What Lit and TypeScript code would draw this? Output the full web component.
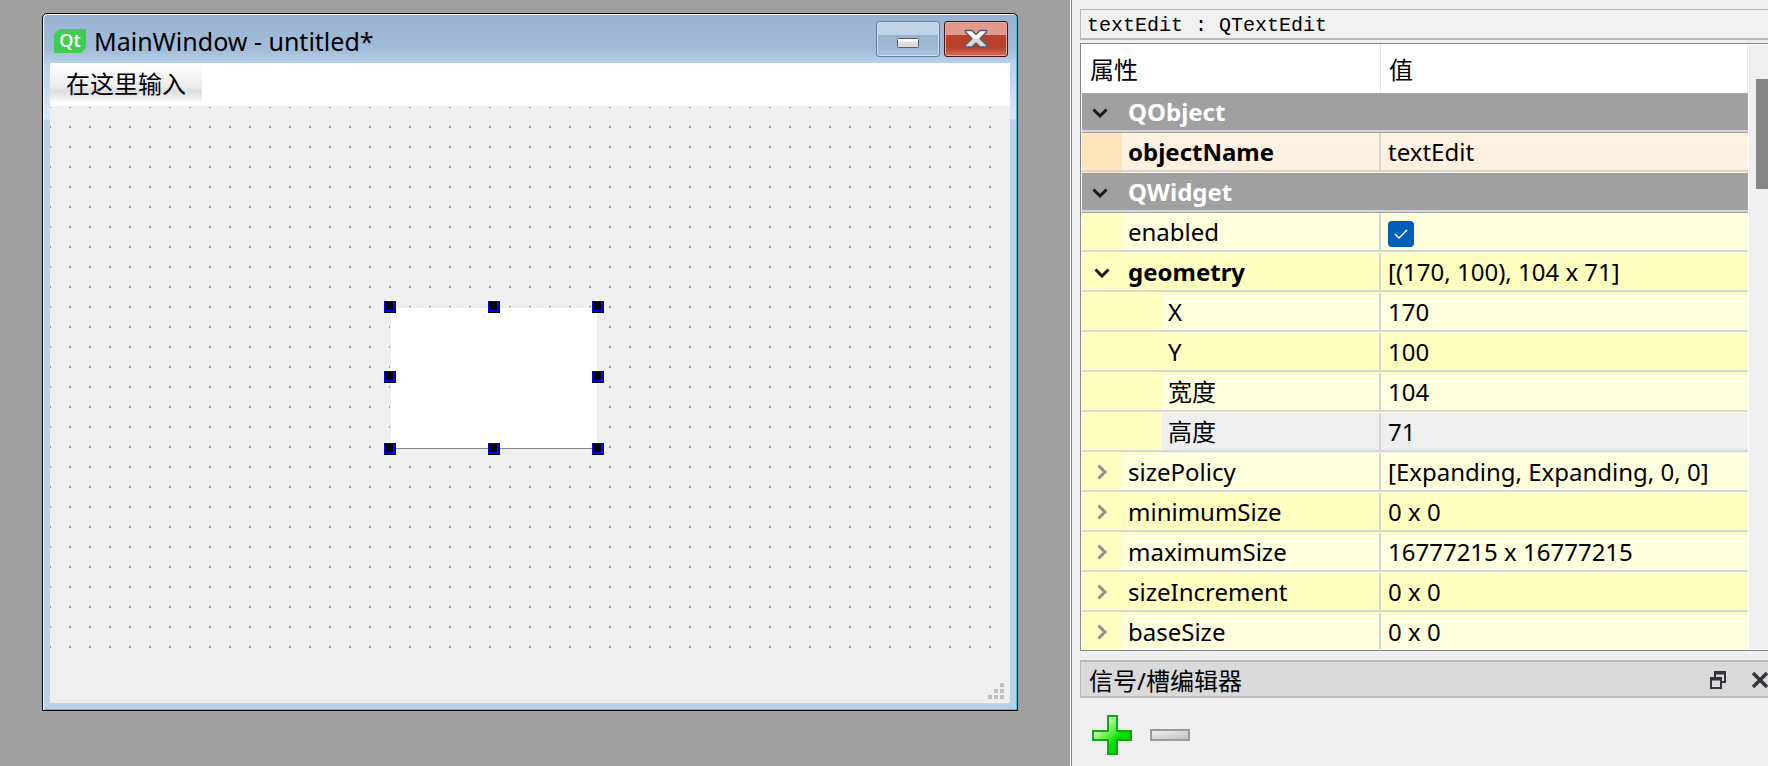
import { LitElement, html, css, svg, nothing } from "lit";
import { customElement, property } from "lit/decorators.js";
import { classMap } from "lit/directives/class-map.js";

interface Row {
  name: string;
  value?: string;
  kind?: "group";
  tone?: "peach" | "light" | "deep" | "plain";
  child?: boolean;
  bold?: boolean;
  checked?: boolean;
  arrow?: "open" | "closed";
}

const ROWS: Row[] = [
  { name: "QObject", kind: "group", arrow: "open" },
  { name: "objectName", value: "textEdit", tone: "peach", bold: true },
  { name: "QWidget", kind: "group", arrow: "open" },
  { name: "enabled", checked: true, tone: "light" },
  { name: "geometry", value: "[(170, 100), 104 x 71]", tone: "deep", bold: true, arrow: "open" },
  { name: "X", value: "170", tone: "light", child: true },
  { name: "Y", value: "100", tone: "deep", child: true },
  { name: "宽度", value: "104", tone: "light", child: true },
  { name: "高度", value: "71", tone: "plain", child: true },
  { name: "sizePolicy", value: "[Expanding, Expanding, 0, 0]", tone: "light", arrow: "closed" },
  { name: "minimumSize", value: "0 x 0", tone: "deep", arrow: "closed" },
  { name: "maximumSize", value: "16777215 x 16777215", tone: "light", arrow: "closed" },
  { name: "sizeIncrement", value: "0 x 0", tone: "deep", arrow: "closed" },
  { name: "baseSize", value: "0 x 0", tone: "light", arrow: "closed" },
];

const reset = css`
  * { box-sizing: border-box; }
  button {
    font: inherit;
    color: inherit;
    margin: 0;
    padding: 0;
    border: 0;
    background: none;
  }
  svg { display: block; }
`;

@customElement("form-window")
export class FormWindow extends LitElement {
  static styles = [
    reset,
    css`
      :host {
        display: flex;
        flex-direction: column;
        border: 1px solid #000;
        border-radius: 5px 5px 0 0;
        background: linear-gradient(#99b4d1, #a2bcd9 36px, #b9d1ea 49px, #dce8f5 105px, #b9d1ea 106px);
        box-shadow: inset 1px 1px #fff, inset -1px -1px #35c5e8;
        padding: 0 7px 7px;
      }
      .title {
        display: flex;
        align-items: flex-start;
        height: 49px;
        padding: 7px 2px 0 4px;
        gap: 4px;
      }
      .brand {
        flex: 1;
        display: flex;
        align-items: center;
        gap: 8px;
        height: 40px;
      }
      h1 {
        margin: 0;
        font-size: 25px;
        font-weight: 400;
        line-height: 32px;
        white-space: nowrap;
      }
      .min, .close {
        display: grid;
        place-items: center;
        width: 64px;
        height: 36px;
        border: 1px solid #66799a;
        border-radius: 3px;
        background: linear-gradient(#bed2e8 0 13px, #98b2d0 13px, #a6c0dd);
        box-shadow: inset 0 0 0 1px #cfdfef;
      }
      .min { padding-top: 8px; }
      .close {
        border-color: #4a1420;
        background: linear-gradient(#e39a8e 0 13px, #b8422b 13px 26px, #cf7459);
        box-shadow: inset 0 0 0 1px #e8a79c;
      }
      .menubar {
        display: flex;
        height: 43px;
        background: #fff;
      }
      .menubar button {
        height: 39px;
        padding: 2px 16px 0;
        font-size: 24px;
        line-height: 32px;
        background: linear-gradient(#fff, #ececec 24px, #dcdcdc 28px, #fafafa);
      }
      .body {
        flex: 1;
        display: flex;
        flex-direction: column;
        background: #efefef;
        padding-top: 1px;
      }
      .dots {
        flex: 1;
        position: relative;
        margin-right: 2px;
        background: conic-gradient(from 270deg at 2px 2px, #a0a0a0 0 90deg, transparent 0) -1px -1px / 20px 20px;
      }
      .edit {
        position: absolute;
        left: 340px;
        top: 200px;
        width: 208px;
        height: 142px;
        resize: none;
        border: 1px solid #ebebeb;
        border-bottom-color: #868686;
        border-radius: 0;
        background: #fff;
        outline: 0;
      }
      .handle {
        position: absolute;
        width: 12px;
        height: 12px;
        background: linear-gradient(#000 0 0) 1px 1px / 8px 8px no-repeat #00f;
        border: 0 solid #000;
        border-width: 0 1px 1px 0;
      }
      .l { left: 334px; }
      .c { left: 438px; }
      .r { left: 542px; }
      .t { top: 194px; }
      .m { top: 264px; }
      .b { top: 336px; }
      .status {
        display: flex;
        justify-content: flex-end;
        align-items: flex-end;
        height: 53px;
        padding: 4px 6px;
      }
    `,
  ];

  render() {
    const handles = ["l t", "c t", "r t", "l m", "r m", "l b", "c b", "r b"];
    return html`
      <div class="title">
        <div class="brand">
          <svg width="32" height="24" viewBox="0 0 32 24">
            <path d="M5 0H32V19L27 24H0V5Z" fill="#41cd52" />
            <text x="16" y="18" text-anchor="middle" font-family="Open Sans, sans-serif" font-size="18" font-weight="600" fill="#fff">Qt</text>
          </svg>
          <h1>MainWindow - untitled*</h1>
        </div>
        <button class="min" aria-label="Minimize">
          <svg width="22" height="10" viewBox="0 0 22 10">
            <defs><linearGradient id="m" x2="0" y2="1"><stop offset=".3" stop-color="#fff" /><stop offset=".4" stop-color="#dcdcdc" /></linearGradient></defs>
            <rect x=".5" y=".5" width="21" height="9" rx="1" fill="url(#m)" stroke="#555a6b" />
          </svg>
        </button>
        <button class="close" aria-label="Close">
          <svg width="24" height="20" viewBox="0 0 24 20">
            <defs><linearGradient id="x" x2="0" y2="1"><stop offset=".45" stop-color="#fff" /><stop offset=".55" stop-color="#d8d8d8" /></linearGradient></defs>
            <path d="M1.5 1.5H8L12 5.5L16 1.5H22.5V3L16 9.5L22.5 16V18H16L12 14L8 18H1.5V16L8 9.5L1.5 3Z" fill="url(#x)" stroke="#555a6b" stroke-width="1.4" stroke-linejoin="round" />
          </svg>
        </button>
      </div>
      <div class="menubar"><button>在这里输入</button></div>
      <div class="body">
        <div class="dots">
          <textarea class="edit" aria-label="textEdit"></textarea>
          ${handles.map((h) => html`<span class="handle ${h}"></span>`)}
        </div>
        <div class="status">
          <svg width="16" height="16" viewBox="0 0 16 16" fill="#bfbfbf">
            <path d="M12 0h4v4h-4zM6 6h4v4h-4zM12 6h4v4h-4zM0 12h4v4h-4zM6 12h4v4h-4zM12 12h4v4h-4z" />
          </svg>
        </div>
      </div>
    `;
  }
}

@customElement("property-table")
export class PropertyTable extends LitElement {
  @property({ attribute: false }) rows: Row[] = [];

  static styles = [
    reset,
    css`
      :host {
        display: flex;
        overflow: hidden;
        border: 1px solid #828790;
        border-right: 0;
        background: #fff;
        padding: 0 0 1px 1px;
      }
      .view {
        flex: 1;
        min-width: 0;
        overflow: hidden;
      }
      table {
        width: 100%;
        table-layout: fixed;
        border-collapse: separate;
        border-spacing: 0;
        font-size: 24px;
        line-height: 32px;
      }
      .name-col { width: 299px; }
      th, td {
        padding: 0;
        text-align: left;
        font-weight: 400;
        white-space: nowrap;
      }
      thead th {
        height: 49px;
        padding: 2px 0 0 8px;
        border-right: 1px solid #e5e5e5;
      }
      tbody th, tbody td {
        height: 40px;
        padding-bottom: 3px;
      }
      .line {
        background-image: linear-gradient(#d6d6d6 0 0);
        background-position: 0 37px;
        background-size: 100% 2px;
        background-repeat: no-repeat;
      }
      .name { display: flex; align-items: center; }
      .text { padding-left: 6px; }
      .key {
        background-image: linear-gradient(#d6d6d6 0 0), linear-gradient(#d6d6d6 0 0), linear-gradient(var(--indent) 0 0);
        background-position: 0 37px, 297px 0, 0 0;
        background-size: 100% 2px, 2px 39px, 40px 100%;
        background-repeat: no-repeat;
      }
      .child { background-size: 100% 2px, 2px 39px, 80px 100%; }
      .child .text { padding-left: 46px; }
      .value { padding-left: 7px; }
      .peach { background-color: #fff1df; --indent: #ffe4bc; }
      .light { background-color: #ffffdd; --indent: #ffffbf; }
      .deep { background-color: #ffffbf; --indent: #ffffbf; }
      .plain { background-color: #efefef; --indent: #ffffbf; }
      .group { background-color: #a0a0a0; color: #fff; }
      .group .text, .bold { font-weight: 700; }
      .arrow {
        display: grid;
        place-items: center;
        width: 40px;
        height: 32px;
        color: #8b8b8b;
      }
      .open { color: #1a1a1a; padding-top: 2px; }
      .group .arrow { padding-right: 4px; }
      .tick {
        display: grid;
        place-items: center;
        width: 26px;
        height: 26px;
      }
      .tick > * { grid-area: 1 / 1; }
      .tick input {
        appearance: none;
        width: 26px;
        height: 26px;
        margin: 0;
        border-radius: 4px;
        background: #005fb8;
      }
      .tick svg { pointer-events: none; position: relative; }
      tbody .checkcell { padding-top: 2px; padding-bottom: 0; }
      .track {
        width: 19px;
        padding: 34px 0 0 7px;
        margin: 1px 0 0 1px;
        background: #efefef;
      }
      .thumb {
        height: 110px;
        background: #858585;
      }
    `,
  ];

  private arrow(kind?: "open" | "closed", label = "") {
    if (!kind) return html`<span class="arrow"></span>`;
    const d = kind === "open" ? "M1.5 1.5L8 8L14.5 1.5" : "M1.5 1.5L8 8L1.5 14.5";
    return html`<button class="arrow ${kind}" aria-label=${label} aria-expanded=${kind === "open"}>
      <svg width=${kind === "open" ? 16 : 10} height=${kind === "open" ? 10 : 16} fill="none" stroke="currentColor" stroke-width="3">
        ${svg`<path d=${d} />`}
      </svg>
    </button>`;
  }

  private row(r: Row) {
    if (r.kind === "group") {
      return html`<tr><th class="group line" colspan="2">
        <div class="name">${this.arrow(r.arrow, r.name)}<span class="text">${r.name}</span></div>
      </th></tr>`;
    }
    const tone = r.tone ?? "light";
    return html`<tr>
      <th scope="row" class=${classMap({ key: true, [tone]: true, child: !!r.child })}>
        <div class="name">${this.arrow(r.arrow, r.name)}<span class=${classMap({ text: true, bold: !!r.bold })}>${r.name}</span></div>
      </th>
      <td class=${classMap({ value: true, line: true, [tone]: true, checkcell: !!r.checked })}>
        ${r.value ?? nothing}
        ${r.checked
          ? html`<label class="tick"><input type="checkbox" aria-label=${r.name} checked />
              <svg width="14" height="10" fill="none" stroke="#fff" stroke-width="1.5"><path d="M1 5L5 9L13 1" /></svg>
            </label>`
          : nothing}
      </td>
    </tr>`;
  }

  render() {
    return html`
      <div class="view">
        <table>
          <colgroup><col class="name-col" /><col /></colgroup>
          <thead><tr><th>属性</th><th>值</th></tr></thead>
          <tbody>${this.rows.map((r) => this.row(r))}</tbody>
        </table>
      </div>
      <div class="track"><div class="thumb"></div></div>
    `;
  }
}

@customElement("app-root")
export class AppRoot extends LitElement {
  static styles = [
    reset,
    css`
      :host {
        display: grid;
        grid-template-columns: minmax(0, 1fr) 698px;
        height: 100vh;
        overflow: hidden;
        background: #a0a0a0;
        color: #000;
        font-family: "Noto Sans", "Noto Sans CJK SC", sans-serif;
      }
      .workspace {
        display: grid;
        padding: 13px 52px 55px 42px;
      }
      .side {
        display: flex;
        flex-direction: column;
        min-width: 0;
        min-height: 0;
        padding: 9px 0 0 8px;
        border-left: 1px solid #828790;
        box-shadow: -1px 0 #fff;
        background: #efefef;
        margin-left: 1px;
      }
      .object {
        height: 31px;
        padding: 4px 0 0 6px;
        border: solid #b8b8b8;
        border-width: 1px 0 2px 1px;
        background: #f1f1f1;
        font-family: "Liberation Mono", monospace;
        font-size: 20px;
        line-height: 24px;
        white-space: pre;
      }
      property-table {
        flex: 1;
        min-height: 0;
        margin: 3px 0 9px;
      }
      .dock {
        display: flex;
        align-items: center;
        height: 38px;
        padding: 2px 0 0 8px;
        border: solid #b8b8b8;
        border-width: 2px 0 2px 1px;
        background: #dadada;
        font-size: 24px;
        line-height: 32px;
      }
      .dock h2 {
        flex: 1;
        margin: 0;
        padding-top: 2px;
        font-size: 24px;
        font-weight: 400;
        white-space: nowrap;
      }
      .float { margin-right: 26px; }
      .tools {
        display: flex;
        align-items: center;
        gap: 18px;
        height: 68px;
        padding: 6px 12px 0;
      }
    `,
  ];

  render() {
    return html`
      <main class="workspace"><form-window></form-window></main>
      <aside class="side">
        <div class="object">textEdit : QTextEdit</div>
        <property-table .rows=${ROWS}></property-table>
        <div class="dock">
          <h2>信号/槽编辑器</h2>
          <button class="float" aria-label="Float">
            <svg width="16" height="18" fill="none" stroke="#31363b" stroke-width="2">
              <path d="M5 6V1H15V11H12M4 2.5H16M1 7H11V17H1ZM0 8.5H12" />
            </svg>
          </button>
          <button aria-label="Close">
            <svg width="16" height="16" stroke="#31363b" stroke-width="3.6"><path d="M1 1L15 15M15 1L1 15" /></svg>
          </button>
        </div>
        <div class="tools">
          <button aria-label="Add">
            <svg width="40" height="40">
              <defs><linearGradient id="g" x2="1" y2="1"><stop offset=".2" stop-color="#d4fbc8" /><stop offset=".45" stop-color="#5fee45" /><stop offset=".62" stop-color="#00e000" /><stop offset="1" stop-color="#00c800" /></linearGradient></defs>
              <path d="M16 1H25V16H39V25H25V39H16V25H1V16H16Z" fill="url(#g)" stroke="#10a810" stroke-width="2" />
            </svg>
          </button>
          <button aria-label="Remove">
            <svg width="40" height="12">
              <defs><linearGradient id="r" x2="1" y2="1"><stop stop-color="#f4f4f4" /><stop offset="1" stop-color="#bcbcbc" /></linearGradient></defs>
              <rect x="1" y="1" width="38" height="10" fill="url(#r)" stroke="#9a9a9a" stroke-width="2" />
            </svg>
          </button>
        </div>
      </aside>
    `;
  }
}
